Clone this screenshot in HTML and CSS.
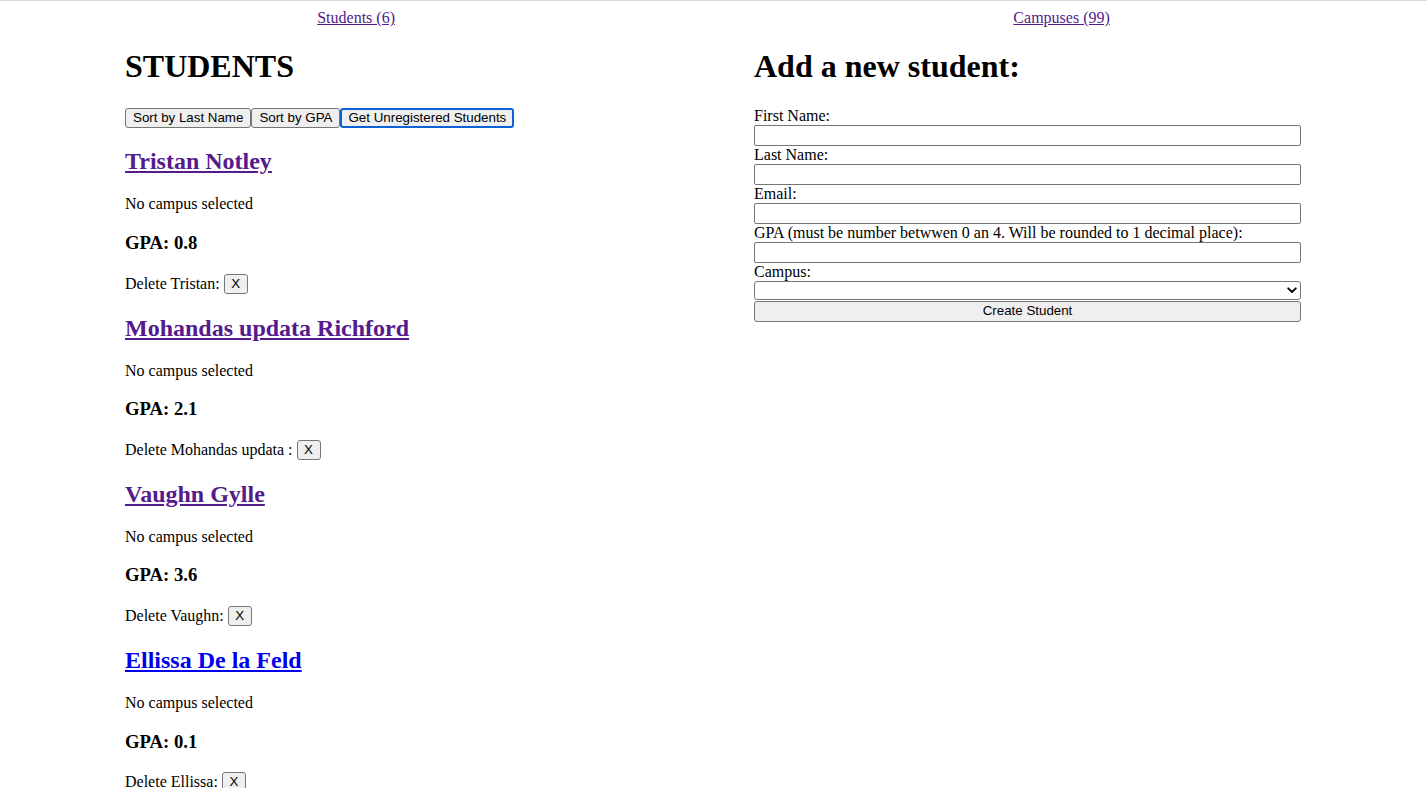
FILE: index.html
```html
<!DOCTYPE html>
<html lang="en">
<head>
<meta charset="utf-8">
<title>Students</title>
<link rel="stylesheet" href="styles.css">
</head>
<body>
<nav class="nav">
  <a class="link visited" href="#students">Students (6)</a>
  <a class="link visited" href="#campuses">Campuses (99)</a>
</nav>
<main class="layout">
  <section class="list-col">
    <h1 class="title">STUDENTS</h1>
    <div class="toolbar"><button class="btn">Sort by Last Name</button><button class="btn">Sort by GPA</button><button class="btn focused">Get Unregistered Students</button></div>

    <div class="student">
      <h2 class="name"><a class="link visited" href="#s1">Tristan Notley</a></h2>
      <p class="para">No campus selected</p>
      <h3 class="gpa">GPA: 0.8</h3>
      <p class="para delrow"><span>Delete Tristan:</span><button class="btn del">X</button></p>
    </div>

    <div class="student">
      <h2 class="name"><a class="link visited" href="#s2">Mohandas updata Richford</a></h2>
      <p class="para">No campus selected</p>
      <h3 class="gpa">GPA: 2.1</h3>
      <p class="para delrow"><span>Delete Mohandas updata :</span><button class="btn del">X</button></p>
    </div>

    <div class="student">
      <h2 class="name"><a class="link visited" href="#s3">Vaughn Gylle</a></h2>
      <p class="para">No campus selected</p>
      <h3 class="gpa">GPA: 3.6</h3>
      <p class="para delrow"><span>Delete Vaughn:</span><button class="btn del">X</button></p>
    </div>

    <div class="student">
      <h2 class="name"><a class="link fresh" href="#s4">Ellissa De la Feld</a></h2>
      <p class="para">No campus selected</p>
      <h3 class="gpa">GPA: 0.1</h3>
      <p class="para delrow"><span>Delete Ellissa:</span><button class="btn del">X</button></p>
    </div>

    <div class="student">
      <h2 class="name"><a class="link fresh" href="#s5">Ada Marlow</a></h2>
      <p class="para">No campus selected</p>
      <h3 class="gpa">GPA: 2.9</h3>
      <p class="para delrow"><span>Delete Ada:</span><button class="btn del">X</button></p>
    </div>
  </section>

  <section class="form-col">
    <h1 class="title">Add a new student:</h1>
    <form class="form">
      <label class="lbl" for="fn">First Name:</label>
      <input class="field" id="fn" type="text">
      <label class="lbl" for="ln">Last Name:</label>
      <input class="field" id="ln" type="text">
      <label class="lbl" for="em">Email:</label>
      <input class="field" id="em" type="text">
      <label class="lbl" for="gpa">GPA (must be number betwwen 0 an 4. Will be rounded to 1 decimal place):</label>
      <input class="field" id="gpa" type="text">
      <label class="lbl" for="cp">Campus:</label>
      <div class="select-wrap">
        <select class="select" id="cp"><option></option></select>
        <svg class="chev" width="10" height="7" viewBox="0 0 10 7"><path d="M1.2 1.3 L5 5 L8.8 1.3" fill="none" stroke="#000" stroke-width="1.8" stroke-linecap="round" stroke-linejoin="round"/></svg>
      </div>
      <button class="btn submit" type="button">Create Student</button>
    </form>
  </section>
</main>
</body>
</html>
```

FILE: styles.css
```css
html {
  border-top: 1px solid #dadada;
  background: #fff;
}

body {
  margin: 8px 8px 8px;
  font-family: "Liberation Serif", "Times New Roman", serif;
  font-size: 16px;
  color: #000;
}

.nav {
  display: flex;
  justify-content: space-around;
}

.link {
  text-decoration: underline;
}

.link.visited {
  color: #551a8b;
}

.link.fresh {
  color: #0000ee;
}

.layout {
  display: grid;
  grid-template-columns: 396px 547px;
  column-gap: 233px;
  padding-left: 117px;
  align-items: start;
}

.title {
  font-size: 32px;
  font-weight: bold;
  margin: 21.44px 0;
}

.toolbar {
  display: flex;
  margin-top: 23px;
}

.btn {
  font-family: "Liberation Sans", Arial, sans-serif;
  font-size: 13.33px;
  color: #000;
  background: #efefef;
  border: 1px solid #767676;
  border-radius: 3px;
  padding: 0 7px;
  height: 20px;
  line-height: 16px;
  margin: 0;
}

.btn.focused {
  border: 2px solid #0b62d6;
  padding: 0 6px;
}

.delrow {
  display: flex;
  align-items: center;
  gap: 4px;
  height: 22px;
}

.btn.del {
  width: 24px;
  padding: 0;
  text-align: center;
}

.name {
  font-size: 24px;
  margin: 19.92px 0;
}

.para {
  margin: 16px 0;
}

.gpa {
  font-size: 18.72px;
  margin: 18.72px 0;
}

.form {
  display: flex;
  flex-direction: column;
}

.lbl {
  display: block;
  line-height: 18px;
}

.field {
  box-sizing: border-box;
  width: 100%;
  height: 21px;
  margin: 0;
  border: 1px solid #767676;
  border-radius: 2px;
  background: #fff;
  padding: 1px 2px;
}

.select-wrap {
  position: relative;
  height: 19px;
}

.select {
  appearance: none;
  -webkit-appearance: none;
  box-sizing: border-box;
  width: 100%;
  height: 19px;
  margin: 0;
  border: 1px solid #767676;
  border-radius: 3px;
  background: #fff;
  padding: 0 4px;
}

.chev {
  position: absolute;
  right: 4px;
  top: 6px;
  pointer-events: none;
}

.submit {
  width: 100%;
  height: 21px;
  margin-top: 1px;
}
```
